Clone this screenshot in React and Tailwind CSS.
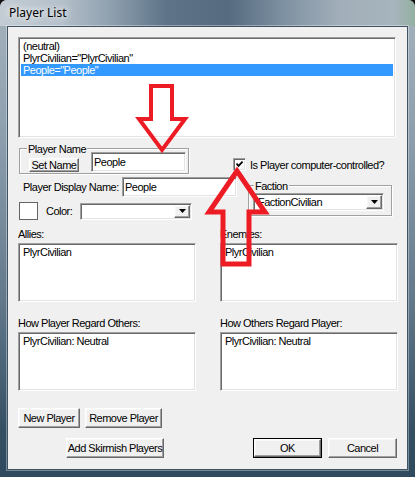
import React from "react";

const sunken =
  "bg-white border border-t-[#a0a0a0] border-l-[#a0a0a0] border-b-white border-r-white shadow-[inset_1px_1px_0_#696969,inset_-1px_-1px_0_#e3e3e3]";
const raised =
  "bg-[#f0f0f0] border border-t-white border-l-white border-b-[#696969] border-r-[#696969] shadow-[inset_-1px_-1px_0_#a0a0a0,inset_1px_1px_0_#f8f8f8]";

const Button = ({ children, className = "", isDefault }) =>
  isDefault ? (
    <div className={`border border-black flex ${className}`}>
      <div className={`${raised} flex-1 flex items-center justify-center leading-[12px]`}>{children}</div>
    </div>
  ) : (
    <div className={`${raised} flex items-center justify-center leading-[12px] ${className}`}>{children}</div>
  );

const Combo = ({ value, className = "" }) => (
  <div className={`${sunken} flex items-stretch p-[1px] ${className}`}>
    <div className="flex-1 pl-[3px] flex items-center leading-[12px] overflow-hidden whitespace-nowrap">{value}</div>
    <div className={`${raised} w-[16px] flex items-center justify-center`}>
      <svg width="7" height="4" viewBox="0 0 7 4">
        <polygon points="0,0 7,0 3.5,4" fill="#000" />
      </svg>
    </div>
  </div>
);

const Group = ({ label, className = "", labelLeft, children }) => (
  <div className={`relative border border-[#a0a0a0] shadow-[1px_1px_0_white,inset_1px_1px_0_white] ${className}`}>
    <span className={`absolute -top-[6px] ${labelLeft} px-[1px] bg-[#f0f0f0] leading-[12px] whitespace-nowrap`}>
      {label}
    </span>
    {children}
  </div>
);

const ListBox = ({ items, className = "", selected }) => (
  <div className={`${sunken} p-[2px] overflow-hidden ${className}`}>
    {items.map((item, i) => (
      <div
        key={item}
        className={`h-[12px] leading-[12px] pl-[2px] whitespace-nowrap ${
          i === selected ? "bg-[#3399ff] text-white" : ""
        }`}
      >
        {item}
      </div>
    ))}
  </div>
);

function Arrows() {
  return (
    <svg className="absolute inset-0 pointer-events-none" width="415" height="477" viewBox="0 0 415 477">
      <polygon
        points="151,86 172,86 172,119 185,119 162,150 139,119 151,119"
        fill="none"
        stroke="#ed1c24"
        strokeWidth="4"
      />
      <polygon
        points="237,171 265,212 249,212 249,264 223,264 223,212 209,212"
        fill="none"
        stroke="#ed1c24"
        strokeWidth="5"
      />
    </svg>
  );
}

export default function App() {
  return (
    <div className="w-[415px] h-[477px] bg-[#111] overflow-hidden font-['Liberation_Sans',Arial,sans-serif] text-[11px] tracking-[-0.5px] text-black">
      <div className="relative w-full h-full rounded-t-[7px] overflow-hidden bg-[linear-gradient(180deg,#a6b3be_0%,#8b9dac_30%,#5f7689_65%,#354f63_90%,#2f4a5e_100%)] flex flex-col">
        {/* Title bar */}
        <div className="h-[26px] shrink-0 pl-[9px] flex items-center bg-[linear-gradient(90deg,#c3ccd4_0%,#b4c0ca_15%,#8a9cab_28%,#5e7388_40%,#566a80_55%,#7d90a1_68%,#a2afba_82%,#a7b5be_95%,#93b0a0_100%)]">
          <span className="font-['Noto_Sans',sans-serif] text-[12px] tracking-normal text-black [text-shadow:0_0_6px_#fff,0_0_10px_#fff]">
            Player List
          </span>
        </div>

        {/* Client area */}
        <div className="mx-[7px] h-[444px] shrink-0 bg-[#f0f0f0] border border-[#3f5363] shadow-[0_0_0_1px_rgba(255,255,255,0.35)] flex flex-col">
          <ListBox
            className="ml-[10px] mt-[10px] w-[378px] h-[101px]"
            items={['(neutral)', 'PlyrCivilian="PlyrCivilian"', 'People="People"']}
            selected={2}
          />

          {/* Top controls */}
          <div className="flex mt-[10px] h-[72px]">
            <div className="w-[225px] shrink-0 flex flex-col">
              <Group label="Player Name" labelLeft="left-[7px]" className="ml-[11px] w-[170px] h-[26px] flex items-start">
                <Button className="ml-[9px] mt-[9px] w-[50px] h-[14px] shrink-0">Set Name</Button>
                <div className={`${sunken} ml-[12px] mt-[3px] w-[95px] h-[20px] shrink-0 pl-[2px] flex items-center leading-[12px]`}>
                  People
                </div>
              </Group>

              <div className="flex items-center mt-[3px] h-[20px]">
                <span className="ml-[15px] w-[99px] shrink-0 leading-[12px] whitespace-nowrap">Player Display Name:</span>
                <div className={`${sunken} w-[115px] h-[20px] shrink-0 pl-[2px] flex items-center leading-[12px]`}>
                  People
                </div>
              </div>

              <div className="flex items-center mt-[5px] h-[18px]">
                <div className="ml-[11px] w-[19px] h-[18px] bg-white border border-[#646464] shrink-0" />
                <span className="ml-[8px] w-[34px] shrink-0 leading-[12px]">Color:</span>
                <Combo className="w-[112px] h-[17px] shrink-0" value="" />
              </div>
            </div>

            <div className="flex-1 flex flex-col">
              <div className="flex items-center mt-[10px] h-[13px]">
                <div className={`${sunken} w-[13px] h-[13px] shrink-0 flex items-center justify-center`}>
                  <svg width="9" height="9" viewBox="0 0 9 9">
                    <polyline points="1.5,3.5 3.5,5.8 7.6,1.6" fill="none" stroke="#000" strokeWidth="1.8" />
                  </svg>
                </div>
                <span className="ml-[4px] leading-[12px] whitespace-nowrap">Is Player computer-controlled?</span>
              </div>

              <Group label="Faction" labelLeft="left-[5px]" className="ml-[15px] mt-[14px] w-[144px] h-[31px]">
                <Combo className="ml-[4px] mt-[7px] w-[131px] h-[18px]" value="FactionCivilian" />
              </Group>
            </div>
          </div>

          {/* Allies / Enemies */}
          <div className="flex ml-[10px] gap-[24px] mt-[8px]">
            <div className="w-[178px] flex flex-col">
              <span className="leading-[12px]">Allies:</span>
              <ListBox className="mt-[3px] h-[59px]" items={["PlyrCivilian"]} />
            </div>
            <div className="w-[178px] flex flex-col">
              <span className="leading-[12px]">Enemies:</span>
              <ListBox className="mt-[3px] h-[59px]" items={["PlyrCivilian"]} />
            </div>
          </div>

          {/* Regard lists */}
          <div className="flex ml-[10px] gap-[24px] mt-[15px]">
            <div className="w-[178px] flex flex-col">
              <span className="leading-[12px]">How Player Regard Others:</span>
              <ListBox className="mt-[3px] h-[59px]" items={["PlyrCivilian: Neutral"]} />
            </div>
            <div className="w-[178px] flex flex-col">
              <span className="leading-[12px]">How Others Regard Player:</span>
              <ListBox className="mt-[3px] h-[59px]" items={["PlyrCivilian: Neutral"]} />
            </div>
          </div>

          {/* Buttons */}
          <div className="flex mt-[17px] ml-[10px]">
            <Button className="w-[62px] h-[20px]">New Player</Button>
            <Button className="ml-[5px] w-[77px] h-[20px]">Remove Player</Button>
          </div>
          <div className="flex mt-[10px] ml-[58px]">
            <Button className="w-[98px] h-[20px]">Add Skirmish Players</Button>
            <Button isDefault className="ml-[89px] w-[69px] h-[20px]">OK</Button>
            <Button className="ml-[6px] w-[69px] h-[20px]">Cancel</Button>
          </div>
        </div>

        <Arrows />
      </div>
    </div>
  );
}
